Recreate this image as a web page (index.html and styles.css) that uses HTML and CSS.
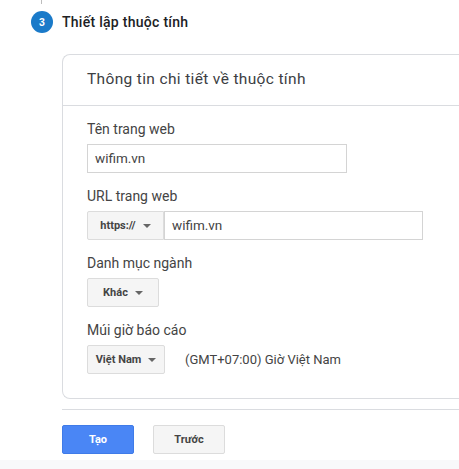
FILE: index.html
```html
<!DOCTYPE html>
<html lang="vi">
<head>
<meta charset="utf-8">
<title>Thiết lập thuộc tính</title>
<link rel="stylesheet" href="styles.css">
</head>
<body>
<div class="page">
  <div class="connector"></div>
  <div class="step-head">
    <div class="step-num">3</div>
    <div class="step-title">Thiết lập thuộc tính</div>
  </div>
  <div class="step-body">
    <section class="card">
      <h2 class="card-title">Thông tin chi tiết về thuộc tính</h2>
      <div class="card-body">
        <div class="field">
          <label class="label">Tên trang web</label>
          <div class="control"><div class="input input-name">wifim.vn</div></div>
        </div>
        <div class="field">
          <label class="label">URL trang web</label>
          <div class="control">
            <div class="select select-proto">https:// <span class="caret"></span></div>
            <div class="input input-url">wifim.vn</div>
          </div>
        </div>
        <div class="field">
          <label class="label">Danh mục ngành</label>
          <div class="control"><div class="select select-cat">Khác <span class="caret"></span></div></div>
        </div>
        <div class="field">
          <label class="label">Múi giờ báo cáo</label>
          <div class="control">
            <div class="select select-tz">Việt Nam <span class="caret"></span></div>
            <div class="tz-text">(GMT+07:00) Giờ Việt Nam</div>
          </div>
        </div>
      </div>
    </section>
    <div class="actions">
      <button class="btn btn-primary">Tạo</button>
      <button class="btn btn-default">Trước</button>
    </div>
  </div>
  <div class="footer"></div>
</div>
</body>
</html>
```
FILE: styles.css
```css
* { box-sizing: border-box; }
html, body { margin: 0; padding: 0; }
body {
  background: #fff;
  font-family: Roboto, "Liberation Sans", sans-serif;
  color: #3c4043;
  overflow: hidden;
}
.page { width: 459px; height: 469px; display: flex; flex-direction: column; overflow: hidden; }
.connector { width: 1px; height: 4px; margin-left: 41px; background: #bdbdbd; flex: none; }
.step-head { display: flex; align-items: center; height: 22px; margin: 7px 0 0 31px; flex: none; }
.step-num {
  width: 22px; height: 22px; border-radius: 50%;
  background: #1a7ac9; color: #fff;
  font: bold 10.5px/22px "Liberation Sans", sans-serif; text-align: center;
}
.step-title { margin-left: 9px; font-size: 14px; font-weight: 500; color: #202124; letter-spacing: .28px; position: relative; top: -0.5px; }
.step-body { margin: 21px 0 0 62px; width: 405px; flex: none; }
.card {
  height: 345px;
  border: 1px solid #dadce0; border-right: 0; border-radius: 8px 0 0 8px;
}
.card-title {
  margin: 0; height: 51px; padding: 0 0 0 24px;
  border-bottom: 1px solid #dadce0;
  font-size: 15.5px; font-weight: 400; line-height: 49px; color: #3c4043; letter-spacing: .35px;
}
.card-body { padding-top: 15px; padding-left: 24px; }
.field { height: 67px; }
.label { display: block; font-size: 14px; line-height: 17px; height: 23px; color: #444; }
.control { display: flex; align-items: stretch; height: 29px; }
.input {
  border: 1px solid #d4d4d4; padding-left: 7px;
  font-size: 13.5px; line-height: 27px; color: #444; background: #fff;
}
.input-name { width: 260px; }
.input-url { width: 259px; }
.select {
  background: #f5f5f5; border: 1px solid #dcdcdc; border-radius: 2px;
  font-size: 11px; font-weight: 700; line-height: 27px; color: #444;
  display: flex; align-items: center; justify-content: center; gap: 7px;
}
.select-proto { width: 77px; border-radius: 2px 0 0 2px; }
.select-cat { width: 72px; }
.select-tz { width: 78px; }
.caret { width: 0; height: 0; border: 4px solid transparent; border-top-color: #666; border-bottom: 0; margin-top: 1px; }
.tz-text { margin-left: 20px; font-size: 13px; line-height: 29px; color: #444; }
.actions {
  margin-top: 10px; height: 51px; padding-top: 15px;
  border-top: 1px solid #dadce0;
  display: flex; gap: 19px; align-items: flex-start;
}
.btn {
  width: 72px; height: 29px; padding: 0; border-radius: 2px;
  font: 700 11px/27px Roboto, "Liberation Sans", sans-serif;
}
.btn-primary { background: #4a86f5; border: 1px solid #3f7be8; color: #fff; }
.btn-default { width: 72px; background: #f5f5f5; border: 1px solid #dcdcdc; color: #444; }
.footer { flex: 1; background: #f8f9fa; }
```
